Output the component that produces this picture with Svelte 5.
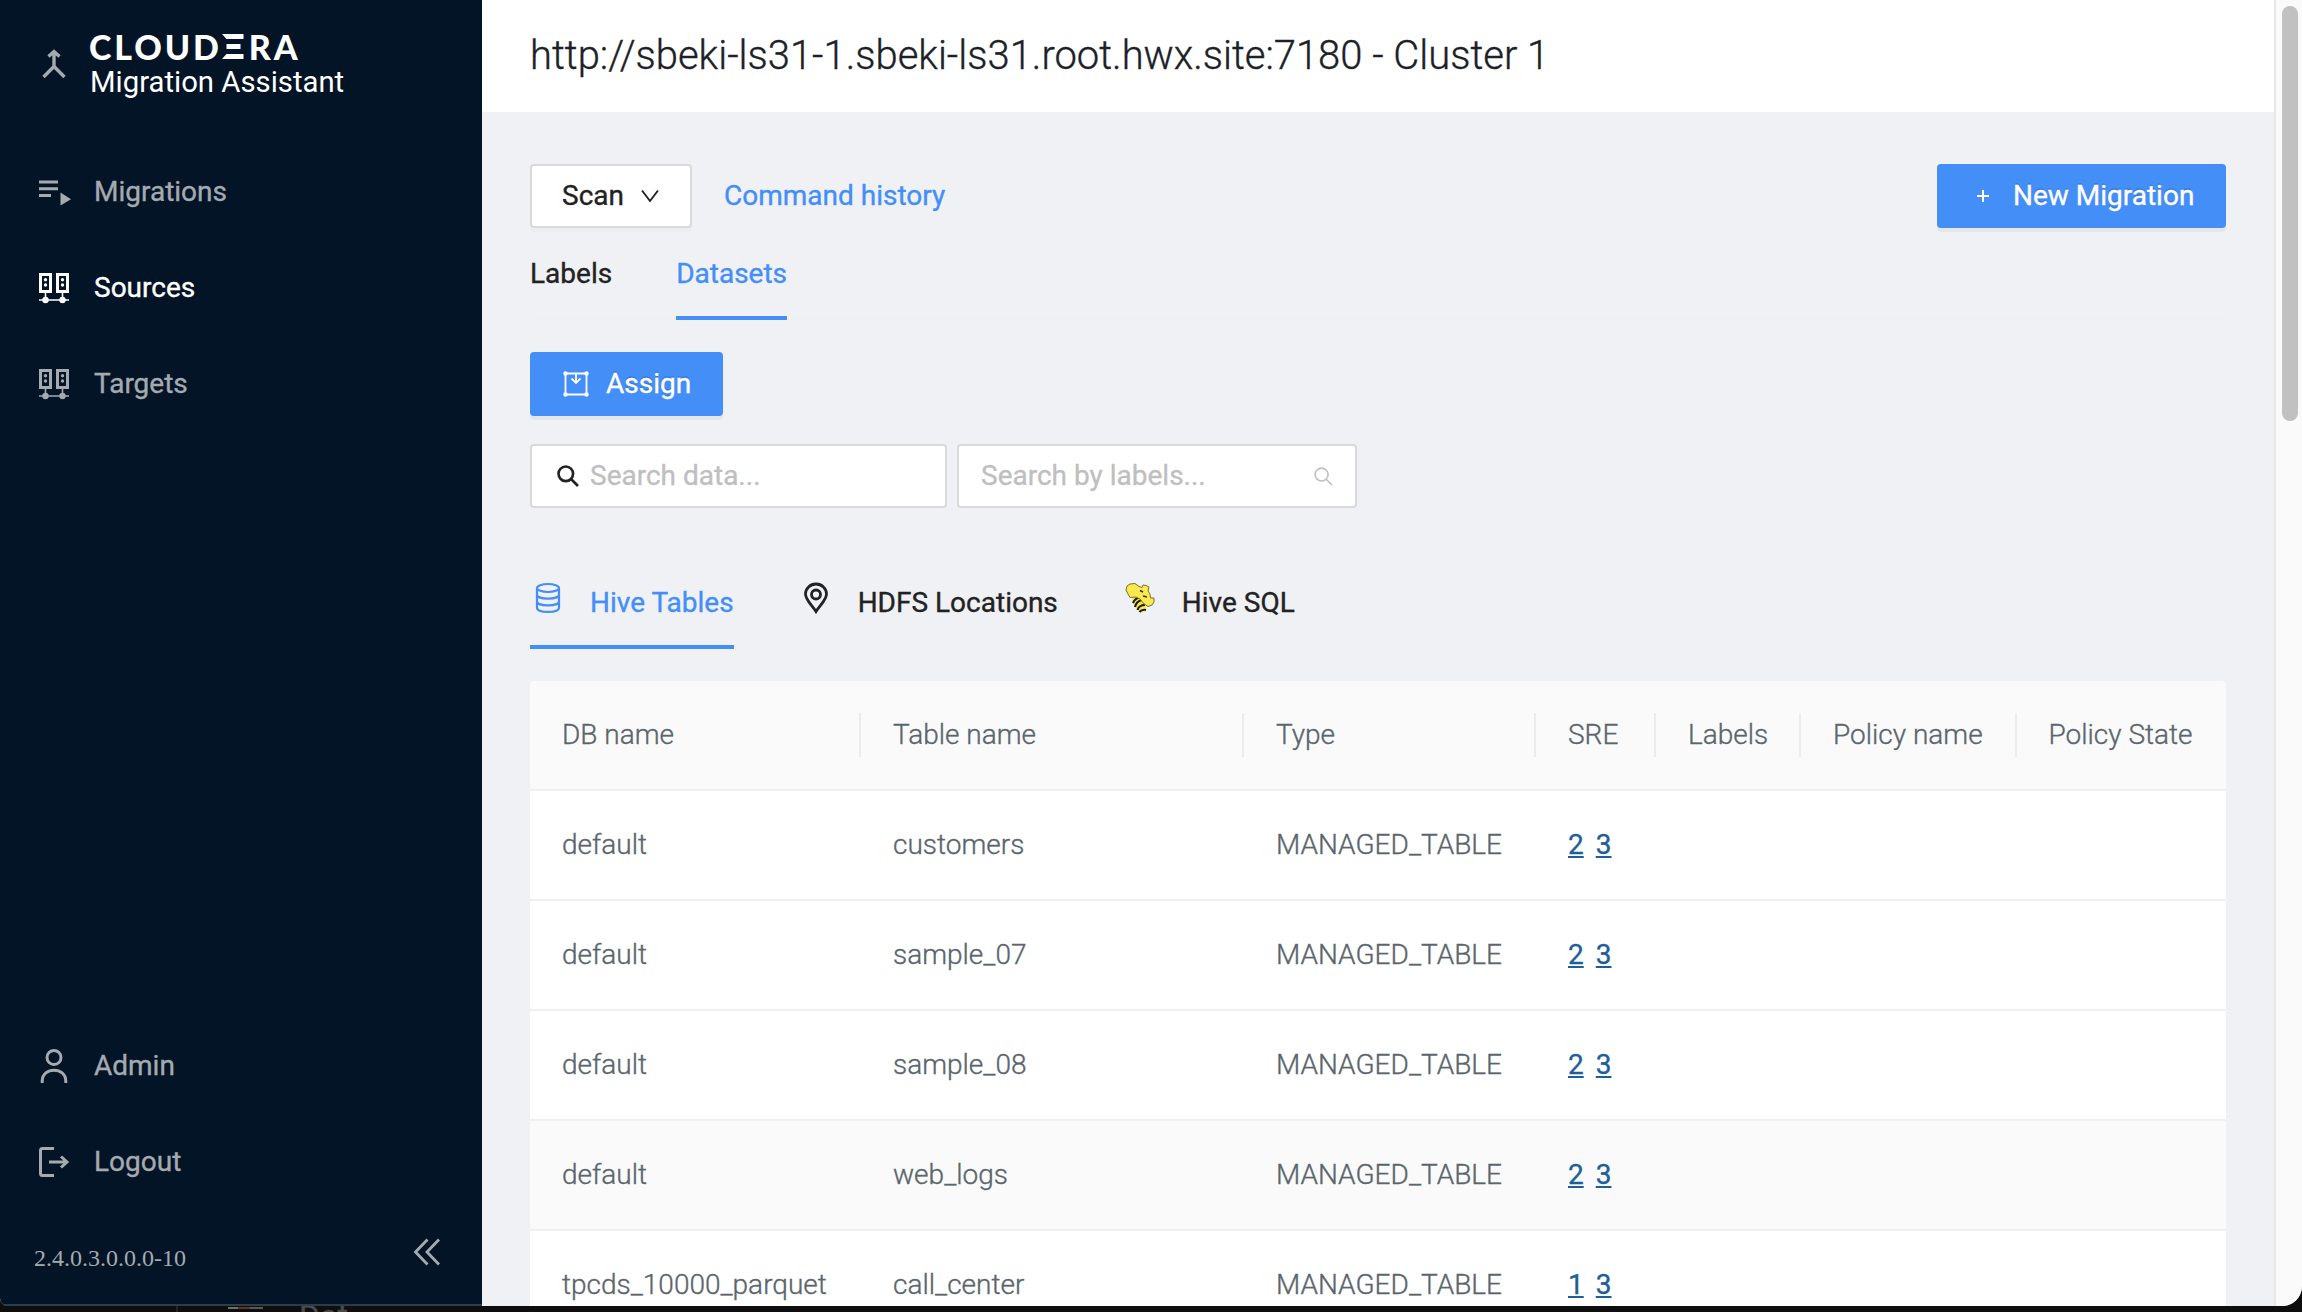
<script>
  const nav = [
    { label: 'Migrations', icon: 'list', active: false },
    { label: 'Sources', icon: 'server', active: true },
    { label: 'Targets', icon: 'server', active: false }
  ];
  const columns = ['DB name', 'Table name', 'Type', 'SRE', 'Labels', 'Policy name', 'Policy State'];
  const rows = [
    { db: 'default', table: 'customers', sre: ['2', '3'] },
    { db: 'default', table: 'sample_07', sre: ['2', '3'] },
    { db: 'default', table: 'sample_08', sre: ['2', '3'] },
    { db: 'default', table: 'web_logs', sre: ['2', '3'], hover: true },
    { db: 'tpcds_10000_parquet', table: 'call_center', sre: ['1', '3'] }
  ];
</script>

<div class="screen">
  <div class="window">
    <aside>
      <div class="brand">
        <svg class="merge" viewBox="0 0 24 30" fill="none" stroke="currentColor" stroke-width="3.4">
          <path d="M12 2V18M6.500 7.500 12 2.500l5.500 5M1.500 28 12 17.500 22.500 28" />
        </svg>
        <div class="brand-text">
          <div class="logo" aria-label="Cloudera"><span>CLOUD</span><svg viewBox="0 0 22 25" fill="#fff"><path d="M0 0H21.500V5H4.500zM4.500 10H18.500V15H4.500zM4.500 20H21.500V25H0z" /></svg><span>RA</span></div>
          <div class="product">Migration Assistant</div>
        </div>
      </div>
      <nav>
        {#each nav as item}
          <div class="item" class:active={item.active}>
            {#if item.icon === 'list'}
              <svg viewBox="0 0 32 32" fill="currentColor"><path d="M0 4.500H19V7.500H0zM0 11.200H19V14.200H0zM0 18H12V21H0zM21.500 16.500 32 23.200 21.500 29.500z" /></svg>
            {:else}
              <svg viewBox="0 0 32 32" fill="none" stroke="currentColor">
                <path stroke-width="3" d="M1.500 2.500H11.500V19.500H1.500zM18.500 2.500H28.500V19.500H18.500z" />
                <path stroke-width="1.600" d="M6.500 20V28M23.500 20V28M0 28H30" />
                <g fill="currentColor" stroke="none"><circle cx="6.500" cy="7.800" r="1.700" /><circle cx="6.500" cy="13" r="1.700" /><circle cx="23.500" cy="7.800" r="1.700" /><circle cx="23.500" cy="13" r="1.700" /><circle cx="6.500" cy="28" r="3.200" /><circle cx="23.500" cy="28" r="3.200" /></g>
              </svg>
            {/if}
            <span>{item.label}</span>
          </div>
        {/each}
      </nav>
      <div class="account">
        <div class="item">
          <svg class="user" viewBox="0 0 32 36" fill="none" stroke="currentColor" stroke-width="3"><circle cx="15" cy="9.500" r="7" /><path d="M3.200 35V33C3.200 18.500 26.800 18.500 26.800 33V35" /></svg>
          <span>Admin</span>
        </div>
        <div class="item">
          <svg viewBox="0 0 32 32" fill="none" stroke="currentColor" stroke-width="3"><path d="M15 2.500H3.500Q1.500 2.500 1.500 4.500V27.500Q1.500 29.500 3.500 29.500H15M10 16H28M22 10.500 28 16 22 21.500" /></svg>
          <span>Logout</span>
        </div>
      </div>
      <div class="version">
        <span>2.4.0.3.0.0.0-10</span>
        <svg viewBox="0 0 28 28" fill="none" stroke="currentColor" stroke-width="2.800"><path d="M14.500 1.500 2.500 14 14.500 26.500M26 1.500 14 14 26 26.500" /></svg>
      </div>
    </aside>

    <main>
      <header><h1>http://sbeki-ls31-1.sbeki-ls31.root.hwx.site:7180 - Cluster 1</h1></header>
      <section>
        <div class="toolbar">
          <button class="scan">Scan <svg viewBox="0 0 18 14" fill="none" stroke="currentColor" stroke-width="1.900"><path d="M1 1.500 9 12 17 1.500" /></svg></button>
          <a class="history">Command history</a>
          <button class="primary new"><svg viewBox="0 0 12 12" stroke="currentColor" stroke-width="2"><path d="M6 0V12M0 6H12" /></svg>New Migration</button>
        </div>
        <div class="tabs">
          <div class="tab">Labels</div>
          <div class="tab on">Datasets</div>
        </div>
        <button class="primary assign">
          <svg viewBox="0 0 26 26" fill="none" stroke="currentColor" stroke-width="1.800"><path d="M2.500 2.500H23.500V23.500H2.500zM13 3V11.500M8.500 7.500 13 12 17.500 7.500" /><g fill="currentColor" stroke="none"><circle cx="2.500" cy="2.500" r="2.200" /><circle cx="23.500" cy="2.500" r="2.200" /><circle cx="2.500" cy="23.500" r="2.200" /><circle cx="23.500" cy="23.500" r="2.200" /></g></svg>
          Assign
        </button>
        <div class="filters">
          <div class="field data">
            <svg viewBox="0 0 22 22" fill="none" stroke="currentColor" stroke-width="2.600"><circle cx="8.800" cy="8.800" r="7.300" /><path d="M14 14 21 21" /></svg>
            <span>Search data...</span>
          </div>
          <div class="field labels">
            <span>Search by labels...</span>
            <svg viewBox="0 0 20 20" fill="none" stroke="currentColor" stroke-width="1.700"><circle cx="8" cy="8" r="6.800" /><path d="M12.900 12.900 19 19" /></svg>
          </div>
        </div>
        <div class="tabs kinds">
          <div class="tab on">
            <svg viewBox="0 0 36 32" fill="none" stroke="currentColor" stroke-width="2.200"><ellipse cx="18" cy="6" rx="11" ry="4" /><path d="M7 6V26C7 31.200 29 31.200 29 26V6M7 12.700C7 17.900 29 17.900 29 12.700M7 19.400C7 24.600 29 24.600 29 19.400" /></svg>
            <span>Hive Tables</span>
          </div>
          <div class="tab">
            <svg viewBox="0 0 36 32" fill="none" stroke="currentColor" stroke-width="2.800"><path d="M18 29.500C14 23 7.500 18 7.500 12A10.500 10 0 0 1 28.500 12C28.500 18 22 23 18 29.500z" /><circle cx="18" cy="12.500" r="4.500" /></svg>
            <span>HDFS Locations</span>
          </div>
          <div class="tab">
            <svg viewBox="1 0 36 32">
              <path d="M11 15 20 14 25 19 25 26 24 30 18 29 12 21z" fill="#fbe94d" />
              <path d="M12 21Q14 16 19 15.500M14 25Q15.500 19 21 18M16.500 28Q18 23 24 23M18.500 30Q21 27 25 28" fill="none" stroke="#1d1d12" stroke-width="2.200" />
              <path d="M5 8 6 4 9 2 14 1.500 18 4.500 21 5.500 22 3 25 3.500 28 5 27 9 29 12 29.500 16 33 16 33 20 31 23 27 24.500 22 21 19 17 15 15 9 15.500 7 12z" fill="#fbe94d" stroke="#77702e" stroke-width="1" />
              <path d="M19 8.500 22 10M22 14 26 15" stroke="#333" stroke-width="1.600" />
            </svg>
            <span>Hive SQL</span>
          </div>
        </div>
        <div class="table">
          <div class="row head">
            {#each columns as c}<div class="cell">{c}</div>{/each}
          </div>
          {#each rows as r}
            <div class="row" class:hover={r.hover}>
              <div class="cell">{r.db}</div>
              <div class="cell">{r.table}</div>
              <div class="cell">MANAGED_TABLE</div>
              <div class="cell sre">{#each r.sre as n}<a>{n}</a>{/each}</div>
              <div class="cell"></div><div class="cell"></div><div class="cell"></div>
            </div>
          {/each}
        </div>
      </section>
    </main>
    <div class="scrollbar"><div class="thumb"></div></div>
  </div>
  <div class="behind"><i class="thumbnail"></i><span>Dat</span></div>
</div>

<style>
  :global(body) { overflow: hidden; }
  .screen { width: 2302px; height: 1312px; background: #0e0e0f; font-family: Roboto, sans-serif; font-size: 28px; line-height: 44px; overflow: hidden; -webkit-text-stroke: .35px; }
  .screen * { box-sizing: border-box; }
  .window { display: flex; height: 1306px; border-radius: 0 0 20px 8px; overflow: hidden; background: #f0f1f5; }
  .behind { display: flex; height: 6px; overflow: hidden; padding-left: 176px; color: #4b4b4b; font-size: 32px; line-height: 20px; }
  .behind::before { content: ''; width: 2px; background: #242424; }
  .thumbnail { width: 35px; height: 2px; margin: 1px 36px 0 50px; background: linear-gradient(90deg, #6c706b 10px, #5a3528 10px 22px, #55594f 22px); }
  svg { display: block; flex: none; }
  aside { width: 482px; flex: none; background: #021425; color: #a5aab0; display: flex; flex-direction: column; border-bottom: 2px solid #2b3c4a; }
  .brand { display: flex; height: 144px; padding: 29px 0 0 42px; }
  .merge { width: 24px; height: 30px; margin-top: 20px; }
  .brand-text { margin-left: 24px; color: #fff; }
  .logo { display: flex; align-items: center; height: 36px; margin-left: -1px; font: 900 34px/36px Lato, sans-serif; letter-spacing: 2.900px; -webkit-text-stroke: 0; }
  .logo svg { width: 22px; height: 25px; margin: 0 5px 1px 0; }
  .logo span { margin-top: -1px; }
  .product { font-size: 29.300px; line-height: 34px; white-space: nowrap; -webkit-text-stroke: 0; }
  .item { display: flex; align-items: center; height: 96px; padding-left: 39px; }
  .item svg { width: 32px; height: 32px; }
  .item .user { height: 36px; }
  .item span { margin-left: 23px; }
  .active { color: #fff; }
  .account { margin-top: auto; }
  .version { display: flex; justify-content: space-between; height: 94px; padding: 24px 41px 0 34px; font: 24px/48px "Liberation Serif", serif; -webkit-text-stroke: 0; }
  .version svg { width: 28px; height: 28px; margin-top: 4px; }
  main { flex: 1; min-width: 0; overflow: hidden; }
  header { height: 112px; background: #fff; padding: 0 48px; overflow: hidden; }
  h1 { margin: 0; font-weight: 300; font-size: 39.950px; line-height: 112px; color: #1b2127; white-space: nowrap; }
  section { padding: 52px 48px 0; }
  .toolbar { display: flex; align-items: center; height: 64px; }
  button { font: inherit; -webkit-text-stroke: inherit; display: flex; align-items: center; height: 64px; border-radius: 4px; padding: 0 30px; white-space: nowrap; }
  .scan { width: 162px; background: #fff; border: 2px solid #d9d9d9; color: #222; box-shadow: 0 4px 0 rgba(0, 0, 0, .015); }
  .scan svg { width: 18px; height: 14px; margin-left: 17px; }
  .history { margin-left: 32px; color: #448ef7; }
  .primary { background: #448ef7; color: #fff; border: 0; box-shadow: 0 4px 0 rgba(0, 0, 0, .043); text-shadow: 0 -2px 0 rgba(0, 0, 0, .12); }
  .new { width: 289px; margin-left: auto; padding-left: 40px; }
  .new svg { width: 12px; height: 12px; margin-right: 24px; }
  .tabs { display: flex; gap: 64px; height: 92px; border-bottom: 2px solid #f0f0f0; color: #222; }
  .tab { height: 92px; padding-top: 24px; flex: none; }
  .on { color: #448ef7; border-bottom: 4px solid #448ef7; }
  .assign { width: 193px; margin-top: 32px; padding: 0 32px 0 33px; }
  .assign svg { width: 26px; height: 26px; margin-right: 17px; }
  .filters { display: flex; gap: 10px; margin-top: 28px; }
  .field { height: 64px; background: #fff; border: 2px solid #d9d9d9; border-radius: 4px; display: flex; align-items: center; color: #bfbfbf; }
  .data { width: 417px; padding-left: 25px; }
  .data svg { width: 22px; height: 22px; color: #222; margin-right: 11px; }
  .labels { width: 400px; padding: 0 22px; justify-content: space-between; }
  .labels svg { width: 19px; height: 19px; }
  .kinds { height: 93px; margin-top: 48px; }
  .kinds .tab { height: 93px; display: flex; padding-top: 25px; }
  .kinds svg { width: 36px; height: 32px; margin: 1px 24px 0 0; }
  .table { margin-top: 32px; color: #5a656d; font-weight: 300; border-radius: 4px 4px 0 0; overflow: hidden; }
  .row { display: grid; grid-template-columns: 331px 383px 292px 120px 145px 215.500px 209.500px; height: 110px; background: #fff; border-bottom: 2px solid #f0f0f0; align-items: center; }
  .head, .hover { background: #fafafa; }
  .cell { padding-left: 32px; white-space: nowrap; }
  .head .cell:not(:last-child) { border-right: 2px solid #ececec; }
  .sre { display: flex; gap: 12px; font-weight: 400; color: #1f5f99; }
  .sre a { text-decoration: underline; text-decoration-thickness: 2px; text-underline-offset: 2px; }
  .scrollbar { width: 28px; flex: none; background: #fafafa; border-left: 2px solid #e8e8e8; padding: 6px 0 0 6px; }
  .thumb { width: 16px; height: 415px; border-radius: 8px; background: #c1c1c1; }
</style>
